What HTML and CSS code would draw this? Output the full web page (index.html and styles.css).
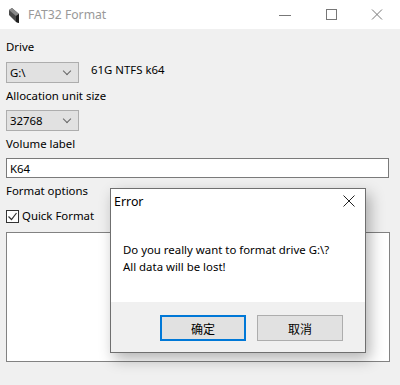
FILE: index.html
```html
<!DOCTYPE html>
<html lang="en">
<head>
    <meta charset="UTF-8">
    <title>FAT32 Format</title>
    <link rel="stylesheet" href="styles.css">
</head>
<body>
    <!-- Title bar -->
    <div class="titlebar">
        <svg class="app-icon" width="10" height="15" viewBox="0 0 10 15">
            <polygon points="0,2 3,0 10,6 10,15 7,14 0,7" fill="#4a4a4a"/>
            <polygon points="0,2 3,0 10,6 7,8" fill="#8a8a8a"/>
            <polygon points="7,8 10,6 10,15 7,14" fill="#1e1e1e"/>
        </svg>
        <span class="title">FAT32 Format</span>
        <div class="controls">
            <span class="ctl"><svg width="12" height="12" viewBox="0 0 12 12"><line x1="0" y1="6.5" x2="12" y2="6.5" stroke="#777"/></svg></span>
            <span class="ctl"><svg width="12" height="12" viewBox="0 0 12 12"><rect x="1.5" y="0.5" width="10" height="10" fill="none" stroke="#777"/></svg></span>
            <span class="ctl"><svg width="12" height="12" viewBox="0 0 12 12"><path d="M1 0.5 L11 10.5 M11 0.5 L1 10.5" stroke="#777"/></svg></span>
        </div>
    </div>

    <div class="content">
        <div class="label first">Drive</div>
        <div class="row">
            <div class="combo">G:\<span class="chev"></span></div>
            <span class="info">61G NTFS k64</span>
        </div>

        <div class="label">Allocation unit size</div>
        <div class="combo">32768<span class="chev"></span></div>

        <div class="label">Volume label</div>
        <div class="textbox">K64</div>

        <div class="label">Format options</div>
        <div class="check-row">
            <span class="checkbox">
                <svg width="11" height="11" viewBox="0 0 11 11"><path d="M1.5 5.5 L4.5 8.5 L9.5 2" fill="none" stroke="#333" stroke-width="1.2"/></svg>
            </span>
            Quick Format
        </div>

        <div class="logbox"></div>
    </div>

    <!-- Error message box -->
    <div class="dialog">
        <div class="dialog-head">
            <span>Error</span>
            <svg width="12" height="12" viewBox="0 0 12 12"><path d="M0.5 0.5 L11.5 11.5 M11.5 0.5 L0.5 11.5" stroke="#222"/></svg>
        </div>
        <div class="dialog-body">
            Do you really want to format drive G:\?<br>
            All data will be lost!
        </div>
        <div class="dialog-foot">
            <button class="btn btn-default">确定</button>
            <button class="btn">取消</button>
        </div>
    </div>
</body>
</html>
```

FILE: styles.css
```css
body {
    margin: 0;
    background-color: #f0f0f0;
    font-family: "Noto Sans", "Noto Sans CJK SC", sans-serif;
    font-size: 11.4px;
    color: #000;
    width: 400px;
    height: 385px;
    overflow: hidden;
}

.titlebar {
    height: 29px;
    background-color: #fff;
    display: flex;
    align-items: center;
}

.app-icon {
    margin-left: 9px;
    margin-top: 1px;
}

.title {
    margin-left: 9px;
    font-size: 12.2px;
    color: #999;
}

.controls {
    margin-left: auto;
    display: flex;
    height: 100%;
}

.ctl {
    width: 46px;
    display: flex;
    align-items: center;
    justify-content: center;
}

.content {
    padding: 0 11px 0 6px;
}

.label {
    line-height: 16px;
    margin: 5px 0 6px 0;
}

.label.first {
    margin-top: 10px;
    margin-bottom: 7px;
}

.row {
    display: flex;
    align-items: flex-start;
}

.info {
    margin-left: 12px;
    line-height: 16px;
}

.combo {
    width: 68px;
    height: 19px;
    background-color: #e1e1e1;
    border: 1px solid #adadad;
    display: flex;
    align-items: center;
    padding-left: 3px;
    position: relative;
}

.chev {
    position: absolute;
    right: 8px;
    top: 5px;
    width: 5px;
    height: 5px;
    border-right: 1px solid #666;
    border-bottom: 1px solid #666;
    transform: rotate(45deg);
}

.textbox {
    height: 18px;
    background-color: #fff;
    border: 1px solid #7a7a7a;
    padding-left: 3px;
    display: flex;
    align-items: center;
    margin-top: 1px;
}

.check-row {
    display: flex;
    align-items: center;
    margin-top: 9px;
    line-height: 16px;
}

.checkbox {
    width: 11px;
    height: 11px;
    border: 1px solid #333;
    background-color: #fff;
    margin-right: 3px;
    display: flex;
}

.logbox {
    margin-top: 8px;
    height: 128px;
    background-color: #fff;
    border: 1px solid #828282;
    margin-right: -1px;
}

/* Error dialog */
.dialog {
    position: absolute;
    left: 110px;
    top: 188px;
    width: 254px;
    height: 163px;
    border: 1px solid #6f6f6f;
    background-color: #fff;
    box-shadow: 4px 6px 14px rgba(0, 0, 0, 0.3);
    display: flex;
    flex-direction: column;
}

.dialog-head {
    height: 24px;
    display: flex;
    align-items: center;
    justify-content: space-between;
    padding: 0 10px 0 3px;
    font-size: 12.4px;
}

.dialog-body {
    height: 89px;
    padding-left: 12px;
    line-height: 17px;
    padding-top: 28px;
    box-sizing: border-box;
}

.dialog-foot {
    flex: 1;
    background-color: #f0f0f0;
    display: flex;
    justify-content: flex-end;
    align-items: flex-start;
    padding: 13px 22px 0 0;
    gap: 11px;
}

.btn {
    width: 86px;
    height: 26px;
    background-color: #e1e1e1;
    border: 1px solid #adadad;
    font-family: "Noto Sans CJK SC", sans-serif;
    font-size: 12px;
    color: #000;
    padding: 0;
}

.btn-default {
    border: 2px solid #0078d7;
}
```
